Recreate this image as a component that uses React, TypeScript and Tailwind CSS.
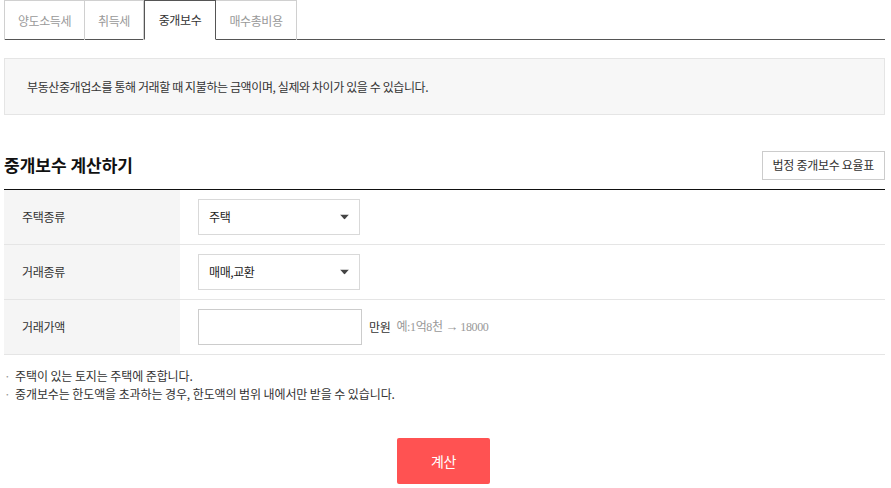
import React from "react";

const font = { fontFamily: '"Noto Sans CJK KR", "Noto Sans", sans-serif' };

function Caret() {
  return (
    <svg width="9" height="5" viewBox="0 0 9 5" className="absolute right-[10px] top-1/2 -translate-y-1/2">
      <path d="M0 0 L9 0 L4.5 5 Z" fill="#444" />
    </svg>
  );
}

function Select({ value }: { value: string }) {
  return (
    <div className="relative w-[162px] h-[36px] border border-[#d9d9d9] bg-white flex items-center pl-[10px] text-[12px] tracking-[-0.4px] text-[#222]">
      {value}
      <Caret />
    </div>
  );
}

function Row({ label, children }: { label: string; children: React.ReactNode }) {
  return (
    <div className="flex h-[55px] border-b border-[#e5e5e5]">
      <div className="w-[176px] bg-[#f5f5f5] flex items-center pl-[18px] text-[12px] tracking-[-0.3px] text-[#333]">{label}</div>
      <div className="flex-1 flex items-center pl-[18px]">{children}</div>
    </div>
  );
}

export default function App() {
  return (
    <div className="w-[891px] h-[488px] bg-white overflow-hidden" style={font}>
      <div className="pl-[4px] pr-[6px]">
        {/* Tabs */}
        <div className="flex h-[40px] border-b border-[#555] text-[12px] tracking-[-0.4px]">
          <div className="w-[81px] h-[40px] border border-[#d0d0d0] border-b-0 flex items-center justify-center text-[#999]">양도소득세</div>
          <div className="w-[59px] h-[40px] border border-l-0 border-[#d0d0d0] border-b-0 flex items-center justify-center text-[#999]">취득세</div>
          <div className="w-[72px] h-[40px] border border-[#555] border-b-white bg-white -mb-[1px] flex items-center justify-center text-[#333]">중개보수</div>
          <div className="w-[81px] h-[40px] border border-l-0 border-[#d0d0d0] border-b-0 flex items-center justify-center text-[#999]">매수총비용</div>
        </div>

        {/* Info */}
        <div className="mt-[18px] h-[57px] bg-[#f7f7f7] border border-[#e5e5e5] flex items-center pl-[22px] text-[12px] tracking-[-0.4px] text-[#333]">
          부동산중개업소를 통해 거래할 때 지불하는 금액이며, 실제와 차이가 있을 수 있습니다.
        </div>

        {/* Heading */}
        <div className="mt-[35px] flex items-center justify-between h-[30px]">
          <div className="text-[17px] font-bold tracking-[0px] text-[#111]">중개보수 계산하기</div>
          <div className="h-[29px] px-[10px] border border-[#ccc] flex items-center text-[12px] tracking-[-0.3px] text-[#333]">법정 중개보수 요율표</div>
        </div>

        {/* Table */}
        <div className="mt-[9px] border-t border-[#111]">
          <Row label="주택종류">
            <Select value="주택" />
          </Row>
          <Row label="거래종류">
            <Select value="매매,교환" />
          </Row>
          <Row label="거래가액">
            <div className="w-[164px] h-[36px] border border-[#ccc] bg-white" />
            <span className="ml-[7px] text-[12px] tracking-[-0.3px] text-[#333]">만원</span>
            <span className="ml-[6px] text-[12px] tracking-[-0.4px] text-[#999]" style={{ fontFamily: '"Liberation Serif", "Noto Sans CJK KR", serif' }}>
              예:1억8천 <span className="text-[13px]">→</span> 18000
            </span>
          </Row>
        </div>

        {/* Notes */}
        <ul className="mt-[12px] text-[12px] tracking-[-0.1px] text-[#333] leading-[18px]">
          <li className="flex"><span className="w-[11px] text-[#999]">·</span>주택이 있는 토지는 주택에 준합니다.</li>
          <li className="flex"><span className="w-[11px] text-[#999]">·</span>중개보수는 한도액을 초과하는 경우, 한도액의 범위 내에서만 받을 수 있습니다.</li>
        </ul>

        {/* Button */}
        <div className="mt-[35px] flex justify-center pr-[2px]">
          <div className="w-[93px] h-[46px] bg-[#ff5252] rounded-[2px] flex items-center justify-center text-white text-[14px] tracking-[-0.3px]">계산</div>
        </div>
      </div>
    </div>
  );
}
